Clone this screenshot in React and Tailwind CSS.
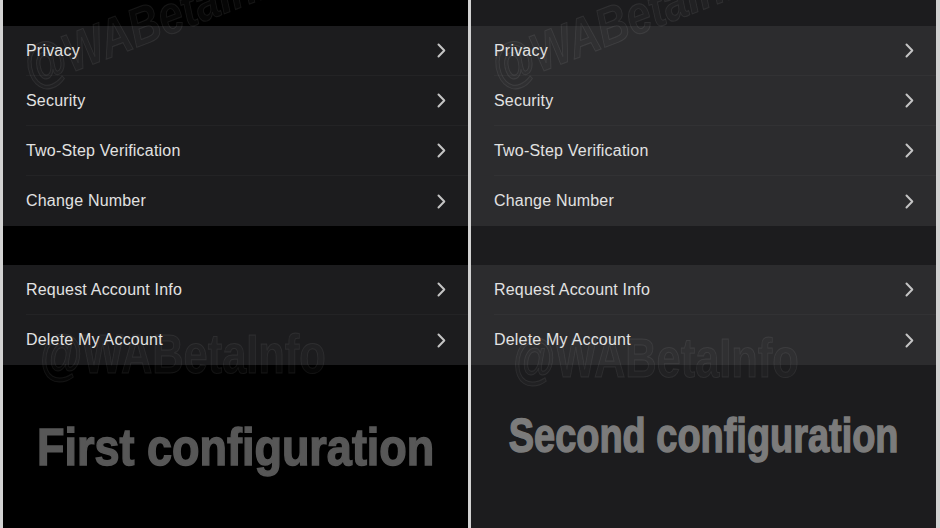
import React from 'react';

const rowsTop = ['Privacy', 'Security', 'Two-Step Verification', 'Change Number'];
const rowsBottom = ['Request Account Info', 'Delete My Account'];

const themes = {
    first: {
        page: 'bg-black',
        row: 'bg-[#1c1c1e]',
        line: 'border-[#232325]',
        label: 'First configuration',
        wrap: 'text-[#575757] pb-0',
        caption: 'text-[52px] scale-x-[0.865] [-webkit-text-stroke:1.5px_#575757]',
        markBottom: 'left-[37px] top-[326px]',
    },
    second: {
        page: 'bg-[#1c1c1e]',
        row: 'bg-[#2c2c2e]',
        line: 'border-[#323234]',
        label: 'Second configuration',
        wrap: 'text-[#7b7b7b] pb-[22px]',
        caption: 'text-[48px] scale-x-[0.79] [-webkit-text-stroke:1.5px_#7b7b7b]',
        markBottom: 'left-[42px] top-[330px]',
    },
};

const Chevron = () => (
    <svg width="9" height="15" viewBox="0 0 9 15" fill="none" className="shrink-0">
        <path d="M1.5 1.5 L7.3 7.5 L1.5 13.5" stroke="#c4c4c4" strokeWidth="2" strokeLinecap="round" strokeLinejoin="round" />
    </svg>
);

const Row = ({ text, line, last }) => (
    <div className="h-[50px] flex items-center pl-[23px]">
        <div className={`flex-1 h-full flex items-center pr-[22px] ${last ? '' : `border-b ${line}`}`}>
            <span className="flex-1 text-[16px] tracking-[0.2px] text-[#e2e2e2]">{text}</span>
            <Chevron />
        </div>
    </div>
);

const Group = ({ items, theme }) => (
    <div className={theme.row}>
        {items.map((t, i) => (
            <Row key={t} text={t} line={theme.line} last={i === items.length - 1} />
        ))}
    </div>
);

const Panel = ({ variant }) => {
    const theme = themes[variant];
    return (
        <div className={`relative flex-1 flex flex-col overflow-hidden ${theme.page}`}>
            <div className="h-[26px] shrink-0" />
            <Group items={rowsTop} theme={theme} />
            <div className="h-[39px] shrink-0" />
            <Group items={rowsBottom} theme={theme} />
            <div className={`flex-1 flex items-center justify-center ${theme.wrap}`}>
                <span className={`whitespace-nowrap font-bold leading-none ${theme.caption}`}>
                    {theme.label}
                </span>
            </div>

            {/* watermarks */}
            <div className="absolute left-[22px] top-[43px] origin-left -rotate-[21deg] scale-x-[0.8] whitespace-nowrap pointer-events-none font-bold italic text-[54px] leading-none text-white/[0.025] [-webkit-text-stroke:1px_rgba(255,255,255,0.08)]">
                @WABetaInfo
            </div>
            <div className={`absolute origin-left scale-x-[0.775] whitespace-nowrap pointer-events-none font-bold text-[56px] leading-none text-white/[0.025] [-webkit-text-stroke:1px_rgba(255,255,255,0.07)] ${theme.markBottom}`}>
                @WABetaInfo
            </div>
        </div>
    );
};

export default function App() {
    return (
        <div className="w-[940px] h-[528px] flex bg-[#d2d2d2] pl-[3px] pr-[4px] gap-[3px] font-['Liberation_Sans',Arial,sans-serif]">
            <Panel variant="first" />
            <Panel variant="second" />
        </div>
    );
}
